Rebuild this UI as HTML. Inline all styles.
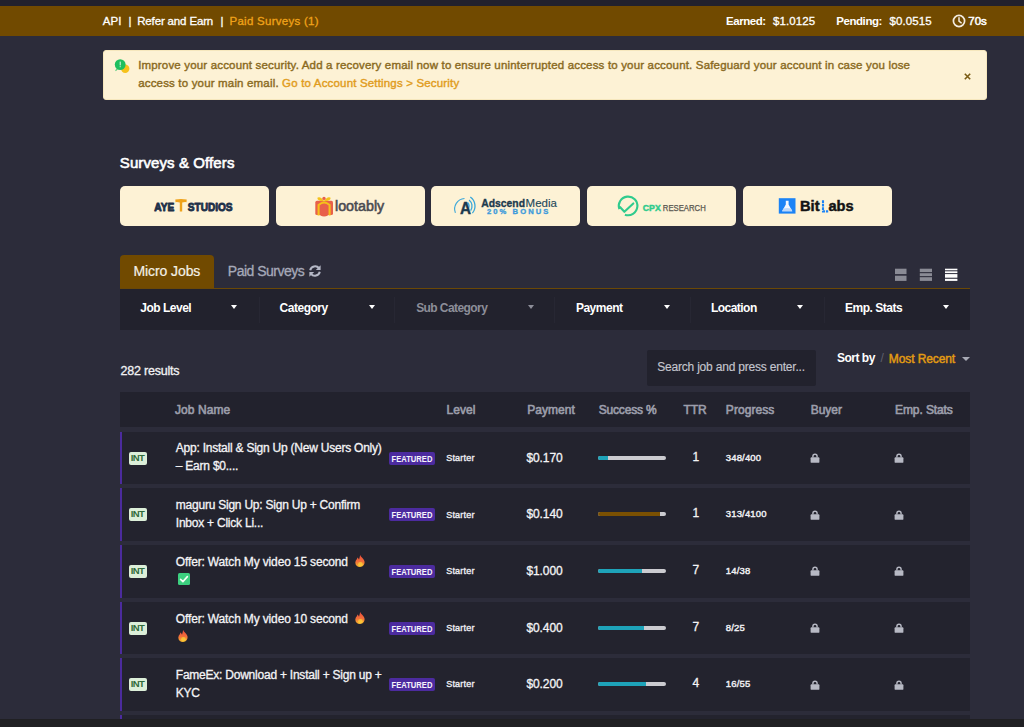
<!DOCTYPE html>
<html><head><meta charset="utf-8"><title>Jobs</title>
<style>
*{box-sizing:border-box;margin:0;padding:0}
html,body{width:1024px;height:727px;overflow:hidden}
body{background:#2c2c3a;font-family:"Liberation Sans",sans-serif;color:#fff;position:relative}
</style></head><body>
<div style="position:absolute;left:0;top:0;width:1024px;height:5.6px;background:#21212d"></div>
<div style="position:absolute;left:0;top:5.6px;width:1024px;height:30.9px;background:#714a00"></div>
<div style="position:absolute;left:102.8px;top:15.67px;font-size:11.5px;line-height:11.5px;white-space:nowrap;-webkit-text-stroke:0.3px currentColor;letter-spacing:0.1px">API</div>
<div style="position:absolute;left:128.5px;top:15.67px;font-size:11.5px;line-height:11.5px;white-space:nowrap;-webkit-text-stroke:0.3px currentColor;">|</div>
<div style="position:absolute;left:137.2px;top:15.67px;font-size:11.5px;line-height:11.5px;white-space:nowrap;-webkit-text-stroke:0.3px currentColor;letter-spacing:-0.15px">Refer and Earn</div>
<div style="position:absolute;left:220.5px;top:15.67px;font-size:11.5px;line-height:11.5px;white-space:nowrap;-webkit-text-stroke:0.3px currentColor;">|</div>
<div style="position:absolute;left:229.5px;top:15.67px;font-size:11.5px;line-height:11.5px;white-space:nowrap;-webkit-text-stroke:0.3px currentColor;letter-spacing:0.27px;color:#f0a31a">Paid Surveys (1)</div>
<div style="position:absolute;left:726.0px;top:15.67px;font-size:11.5px;line-height:11.5px;white-space:nowrap;font-weight:bold;letter-spacing:-0.45px">Earned:</div>
<div style="position:absolute;left:772.9px;top:15.67px;font-size:11.5px;line-height:11.5px;white-space:nowrap;-webkit-text-stroke:0.3px currentColor;letter-spacing:0.1px">$1.0125</div>
<div style="position:absolute;left:836.2px;top:15.67px;font-size:11.5px;line-height:11.5px;white-space:nowrap;font-weight:bold;letter-spacing:-0.42px">Pending:</div>
<div style="position:absolute;left:889.4px;top:15.67px;font-size:11.5px;line-height:11.5px;white-space:nowrap;-webkit-text-stroke:0.3px currentColor;letter-spacing:0.1px">$0.0515</div>
<svg style="position:absolute;left:952px;top:14px" width="14" height="14" viewBox="0 0 14 14"><circle cx="7" cy="7" r="5.6" fill="none" stroke="#f3ece0" stroke-width="1.7"/><path d="M7 3.8V7.2L9.2 8.8" fill="none" stroke="#f3ece0" stroke-width="1.5" stroke-linecap="round"/></svg>
<div style="position:absolute;left:968.2px;top:15.67px;font-size:11.5px;line-height:11.5px;white-space:nowrap;letter-spacing:0.05px;-webkit-text-stroke:0.5px #fff">70s</div>
<div style="position:absolute;left:103.4px;top:49.6px;width:883.6px;height:50.8px;background:#fdf2d5;border-radius:3px;border:1px solid #f6e7bd"></div>
<svg style="position:absolute;left:113px;top:57px" width="20" height="18" viewBox="0 0 20 18"><circle cx="12.2" cy="11.8" r="4.2" fill="#f6c21c"/><circle cx="7.2" cy="7.6" r="5.4" fill="#1fbf5f"/><path d="M3 12.2L2.2 14.2L5 12.6Z" fill="#1fbf5f"/><rect x="6.7" y="4.6" width="1" height="3.8" fill="#e6f5e6"/><rect x="6.7" y="9.2" width="1" height="1" fill="#e6f5e6"/></svg>
<div style="position:absolute;left:138.2px;top:59.87px;font-size:11.5px;line-height:11.5px;white-space:nowrap;color:#8a6a1e;-webkit-text-stroke:0.4px #8a6a1e;letter-spacing:0.17px">Improve your account security. Add a recovery email now to ensure uninterrupted access to your account. Safeguard your account in case you lose</div>
<div style="position:absolute;left:138.2px;top:77.87px;font-size:11.5px;line-height:11.5px;white-space:nowrap;color:#8a6a1e;-webkit-text-stroke:0.4px #8a6a1e;letter-spacing:0.17px">access to your main email. <span style="color:#e19c1d;-webkit-text-stroke:0.4px #e19c1d">Go to Account Settings &gt; Security</span></div>
<svg style="position:absolute;left:964px;top:72.5px" width="7" height="7" viewBox="0 0 7 7"><path d="M0.8 0.8L6.2 6.2M6.2 0.8L0.8 6.2" stroke="#7a5c14" stroke-width="1.6"/></svg>
<div style="position:absolute;left:119.8px;top:155.10px;font-size:15px;line-height:15px;white-space:nowrap;letter-spacing:0.1px;-webkit-text-stroke:0.6px #fff">Surveys &amp; Offers</div>
<div style="position:absolute;left:120px;top:186px;width:149px;height:40px;background:#fdf2d5;border-radius:5px"></div>
<div style="position:absolute;left:275.5px;top:186px;width:149px;height:40px;background:#fdf2d5;border-radius:5px"></div>
<div style="position:absolute;left:431px;top:186px;width:149px;height:40px;background:#fdf2d5;border-radius:5px"></div>
<div style="position:absolute;left:587px;top:186px;width:149px;height:40px;background:#fdf2d5;border-radius:5px"></div>
<div style="position:absolute;left:742.5px;top:186px;width:149px;height:40px;background:#fdf2d5;border-radius:5px"></div>
<svg style="position:absolute;left:150px;top:194px" width="90" height="22" viewBox="0 0 90 22">
<text x="4.3" y="16.9" font-family="Liberation Sans" font-weight="bold" font-size="11.6" fill="#1e3049" stroke="#1e3049" stroke-width="0.9" stroke-linejoin="round" textLength="20" lengthAdjust="spacingAndGlyphs">AYE</text>
<path d="M25.3 5.6Q31 4.4 36.7 5.6L36.5 8.2Q34.2 7.9 32.2 8.6L32.2 17.4L29.8 17.4L29.8 8.6Q27.8 7.9 25.5 8.2Z" fill="#eea21b"/>
<text x="37.8" y="16.9" font-family="Liberation Sans" font-weight="bold" font-size="11.6" fill="#1e3049" stroke="#1e3049" stroke-width="0.9" stroke-linejoin="round" textLength="44.8" lengthAdjust="spacingAndGlyphs">STUDIOS</text>
</svg>
<svg style="position:absolute;left:312px;top:194px" width="80" height="26" viewBox="0 0 80 26">
<path d="M3.3 8.5Q3.3 6.8 5 6.8H19.4Q21 6.8 21 8.5V19.5Q21 21 19.4 21H5Q3.3 21 3.3 19.5Z" fill="#e8604a"/>
<path d="M6.6 21.5V11Q12.1 6 17.6 11V21.5" fill="none" stroke="#f5c11a" stroke-width="2.1"/>
<path d="M8.3 21.5V12.2Q12.1 9 15.9 12.2V21.5Q12.1 23.6 8.3 21.5Z" fill="#e8604a"/>
<path d="M12 7Q8.5 1.8 5.6 3.6Q4.2 6.6 12 7.6Q19.8 6.6 18.4 3.6Q15.5 1.8 12 7Z" fill="#f5c11a"/>
<circle cx="12" cy="4.4" r="1.7" fill="#e8604a"/>
<text x="23" y="16.75" font-family="Liberation Sans" font-size="14" fill="#4a4a51" stroke="#4a4a51" stroke-width="0.55" textLength="49.2" lengthAdjust="spacingAndGlyphs">lootably</text>
</svg>
<svg style="position:absolute;left:450px;top:194px" width="112" height="24" viewBox="0 0 112 24">
<path d="M5.4 18.9A10.5 10.5 0 0 1 14.5 4.5" fill="none" stroke="#3aa7d9" stroke-width="1.1"/>
<path d="M20.3 3A11 11 0 0 1 22.4 19.1M19.1 5.9A8 8 0 0 1 20.6 16.6M17.5 8.5A5 5 0 0 1 18.3 14.5" fill="none" stroke="#3aa7d9" stroke-width="1.3"/>
<text x="9.9" y="19.5" font-family="Liberation Sans" font-weight="bold" font-size="16" fill="#1c3a4e" stroke="#1c3a4e" stroke-width="0.4" textLength="11" lengthAdjust="spacingAndGlyphs">A</text>
<text x="31.2" y="12.6" font-family="Liberation Sans" font-weight="bold" font-size="11.5" fill="#1c3a4e" stroke="#1c3a4e" stroke-width="0.35" textLength="43.8" lengthAdjust="spacingAndGlyphs">Adscend</text>
<text x="75.6" y="12.6" font-family="Liberation Sans" font-size="11.5" fill="#244a5c" stroke="#244a5c" stroke-width="0.15" textLength="31.3" lengthAdjust="spacingAndGlyphs">Media</text>
<text x="37" y="20" font-family="Liberation Sans" font-weight="bold" font-size="7.6" fill="#3d9bdb" stroke="#3d9bdb" stroke-width="0.35" textLength="61.3" lengthAdjust="spacing">20% BONUS</text>
</svg>
<svg style="position:absolute;left:612px;top:192px" width="100" height="28" viewBox="0 0 100 28">
<path d="M7.36 17.08A9.3 9.3 0 1 1 12.92 22.64" fill="none" stroke="#2fcb8d" stroke-width="2.1"/>
<path d="M8.2 15.2L12.4 19.8L21.3 11.4" fill="none" stroke="#2fcb8d" stroke-width="2.1" stroke-linecap="round" stroke-linejoin="round"/>
<text x="30.8" y="18.6" font-family="Liberation Sans" font-weight="bold" font-size="9" fill="#2fcb8d" stroke="#2fcb8d" stroke-width="0.45" textLength="18" lengthAdjust="spacingAndGlyphs">CPX</text>
<text x="50.8" y="18.6" font-family="Liberation Sans" font-size="9" fill="#59574f" stroke="#59574f" stroke-width="0.25" textLength="43" lengthAdjust="spacingAndGlyphs">RESEARCH</text>
</svg>
<svg style="position:absolute;left:774px;top:192px" width="90" height="26" viewBox="0 0 90 26">
<rect x="4.8" y="6.2" width="16.7" height="15.4" fill="#1b83f6"/>
<path d="M11.8 8.8H14.6V12.6L18.3 19.2H8.1L11.8 12.6Z" fill="#f4f8ff"/>
<path d="M9.4 16.5Q13 15.3 17 16.5L18.3 19.2H8.1Z" fill="#bcd8fb"/>
<text x="26" y="19.3" font-family="Liberation Sans" font-weight="bold" font-size="15" fill="#141414" stroke="#141414" stroke-width="0.5" textLength="19.5" lengthAdjust="spacingAndGlyphs">Bit</text>
<path d="M49 8.3V19.4H54.2" fill="none" stroke="#1b83f6" stroke-width="2.1" stroke-dasharray="2.6 0.9"/>
<text x="54.4" y="19.3" font-family="Liberation Sans" font-weight="bold" font-size="15" fill="#141414" stroke="#141414" stroke-width="0.5" textLength="25.2" lengthAdjust="spacingAndGlyphs">abs</text>
</svg>
<div style="position:absolute;left:120px;top:255px;width:94px;height:34px;background:#714a00;border-radius:4px 4px 0 0"></div>
<div style="position:absolute;left:133.4px;top:264.45px;font-size:14px;line-height:14px;white-space:nowrap;letter-spacing:-0.08px;color:#f4f0e6;-webkit-text-stroke:0.2px #f4f0e6">Micro Jobs</div>
<div style="position:absolute;left:227.8px;top:264.35px;font-size:14px;line-height:14px;white-space:nowrap;-webkit-text-stroke:0.3px currentColor;letter-spacing:-0.5px;color:#a6a9b9">Paid Surveys</div>
<svg style="position:absolute;left:308px;top:264px" width="14" height="14" viewBox="0 0 14 14"><path d="M2.2 6.2A5 5 0 0 1 11 4.2" fill="none" stroke="#b5b8c6" stroke-width="2"/><path d="M12.6 1.2V6H7.8Z" fill="#b5b8c6"/><path d="M11.8 7.8A5 5 0 0 1 3 9.8" fill="none" stroke="#b5b8c6" stroke-width="2"/><path d="M1.4 12.8V8H6.2Z" fill="#b5b8c6"/></svg>
<svg style="position:absolute;left:894px;top:268px" width="64" height="14" viewBox="0 0 64 14"><rect x="1" y="0.7" width="11.5" height="5.4" fill="#8a8b95"/><rect x="1" y="7.7" width="11.5" height="5.2" fill="#8a8b95"/><rect x="25.8" y="0.7" width="12.2" height="3.4" fill="#8a8b95"/><rect x="25.8" y="5.2" width="12.2" height="2.9" fill="#8a8b95"/><rect x="25.8" y="9.2" width="12.2" height="3.7" fill="#8a8b95"/><rect x="51" y="0.7" width="12.4" height="1.6" fill="#fff"/><rect x="51" y="3.3" width="12.4" height="1.8" fill="#fff"/><rect x="51" y="6.1" width="12.4" height="3.6" fill="#fff"/><rect x="51" y="10.8" width="12.4" height="2.1" fill="#fff"/></svg>
<div style="position:absolute;left:120px;top:288px;width:850px;height:42px;background:#22222d;border-top:1px solid #6b4806"></div>
<div style="position:absolute;left:140.3px;top:301.84px;font-size:12px;line-height:12px;white-space:nowrap;font-weight:bold;letter-spacing:-0.5px;color:#fff">Job Level</div>
<div style="position:absolute;left:231.1px;top:305px;width:0;height:0;border-left:3.8px solid transparent;border-right:3.8px solid transparent;border-top:4px solid #fff"></div>
<div style="position:absolute;left:279.5px;top:301.84px;font-size:12px;line-height:12px;white-space:nowrap;font-weight:bold;letter-spacing:-0.47px;color:#fff">Category</div>
<div style="position:absolute;left:369px;top:305px;width:0;height:0;border-left:3.8px solid transparent;border-right:3.8px solid transparent;border-top:4px solid #fff"></div>
<div style="position:absolute;left:416.2px;top:301.84px;font-size:12px;line-height:12px;white-space:nowrap;font-weight:bold;letter-spacing:-0.58px;color:#8d8e99">Sub Category</div>
<div style="position:absolute;left:528.4px;top:305px;width:0;height:0;border-left:3.8px solid transparent;border-right:3.8px solid transparent;border-top:4px solid #8d8e99"></div>
<div style="position:absolute;left:575.9px;top:301.84px;font-size:12px;line-height:12px;white-space:nowrap;font-weight:bold;letter-spacing:-0.48px;color:#fff">Payment</div>
<div style="position:absolute;left:663.8px;top:305px;width:0;height:0;border-left:3.8px solid transparent;border-right:3.8px solid transparent;border-top:4px solid #fff"></div>
<div style="position:absolute;left:710.9px;top:301.84px;font-size:12px;line-height:12px;white-space:nowrap;font-weight:bold;letter-spacing:-0.52px;color:#fff">Location</div>
<div style="position:absolute;left:796.9px;top:305px;width:0;height:0;border-left:3.8px solid transparent;border-right:3.8px solid transparent;border-top:4px solid #fff"></div>
<div style="position:absolute;left:845.0px;top:301.84px;font-size:12px;line-height:12px;white-space:nowrap;font-weight:bold;letter-spacing:-0.48px;color:#fff">Emp. Stats</div>
<div style="position:absolute;left:943.1px;top:305px;width:0;height:0;border-left:3.8px solid transparent;border-right:3.8px solid transparent;border-top:4px solid #fff"></div>
<div style="position:absolute;left:258.75px;top:297px;width:1px;height:26px;background:#272733"></div>
<div style="position:absolute;left:394.4px;top:297px;width:1px;height:26px;background:#272733"></div>
<div style="position:absolute;left:554px;top:297px;width:1px;height:26px;background:#272733"></div>
<div style="position:absolute;left:690px;top:297px;width:1px;height:26px;background:#272733"></div>
<div style="position:absolute;left:824px;top:297px;width:1px;height:26px;background:#272733"></div>
<div style="position:absolute;left:120.4px;top:364.92px;font-size:12.5px;line-height:12.5px;white-space:nowrap;-webkit-text-stroke:0.3px currentColor;letter-spacing:-0.2px;color:#f2f2f4">282 results</div>
<div style="position:absolute;left:647px;top:350px;width:169px;height:36px;background:#22222d;border-radius:2px"></div>
<div style="position:absolute;left:657.2px;top:360.74px;font-size:12px;line-height:12px;white-space:nowrap;-webkit-text-stroke:0.3px currentColor;letter-spacing:-0.2px;color:#c4c5cd;-webkit-text-stroke:0.15px #c4c5cd">Search job and press enter...</div>
<div style="position:absolute;left:837.0px;top:352.44px;font-size:12px;line-height:12px;white-space:nowrap;font-weight:bold;letter-spacing:-0.5px">Sort by</div>
<div style="position:absolute;left:880.5px;top:352.44px;font-size:12px;line-height:12px;white-space:nowrap;color:#5f606c">/</div>
<div style="position:absolute;left:888.8px;top:352.64px;font-size:12px;line-height:12px;white-space:nowrap;letter-spacing:-0.1px;color:#e39c12;-webkit-text-stroke:0.45px #e39c12">Most Recent</div>
<div style="position:absolute;left:961.8px;top:356.6px;width:0;height:0;border-left:4.1px solid transparent;border-right:4.1px solid transparent;border-top:4px solid #a9abb6"></div>
<div style="position:absolute;left:120px;top:392px;width:850px;height:35px;background:#22222d"></div>
<div style="position:absolute;left:174.9px;top:403.84px;font-size:12px;line-height:12px;white-space:nowrap;letter-spacing:0.1px;color:#9c9eab;-webkit-text-stroke:0.6px #9c9eab">Job Name</div>
<div style="position:absolute;left:446.6px;top:403.84px;font-size:12px;line-height:12px;white-space:nowrap;letter-spacing:0.05px;color:#9c9eab;-webkit-text-stroke:0.6px #9c9eab">Level</div>
<div style="position:absolute;left:527.2px;top:403.84px;font-size:12px;line-height:12px;white-space:nowrap;letter-spacing:0.04px;color:#9c9eab;-webkit-text-stroke:0.6px #9c9eab">Payment</div>
<div style="position:absolute;left:598.8000000000001px;top:403.84px;font-size:12px;line-height:12px;white-space:nowrap;letter-spacing:-0.2px;color:#9c9eab;-webkit-text-stroke:0.6px #9c9eab">Success %</div>
<div style="position:absolute;left:683.4px;top:403.84px;font-size:12px;line-height:12px;white-space:nowrap;letter-spacing:-0.07px;color:#9c9eab;-webkit-text-stroke:0.6px #9c9eab">TTR</div>
<div style="position:absolute;left:725.8000000000001px;top:403.84px;font-size:12px;line-height:12px;white-space:nowrap;letter-spacing:0.08px;color:#9c9eab;-webkit-text-stroke:0.6px #9c9eab">Progress</div>
<div style="position:absolute;left:810.7px;top:403.84px;font-size:12px;line-height:12px;white-space:nowrap;letter-spacing:-0.01px;color:#9c9eab;-webkit-text-stroke:0.6px #9c9eab">Buyer</div>
<div style="position:absolute;left:895.1px;top:403.84px;font-size:12px;line-height:12px;white-space:nowrap;letter-spacing:-0.11px;color:#9c9eab;-webkit-text-stroke:0.6px #9c9eab">Emp. Stats</div>
<div style="position:absolute;left:120px;top:431.8px;width:850px;height:52.5px;background:#23232e;border-left:2px solid #4b2b9d"></div>
<div style="position:absolute;left:128.6px;top:451.8px;width:18.8px;height:13px;background:#dcefd9;border-radius:2px;border:none"></div>
<div style="position:absolute;left:130.8px;top:452.86px;font-size:9.5px;line-height:9.5px;white-space:nowrap;font-weight:bold;letter-spacing:-0.6px;color:#2f6b3a">INT</div>
<div style="position:absolute;left:175.8px;top:442.24px;font-size:12px;line-height:12px;white-space:nowrap;-webkit-text-stroke:0.3px currentColor;letter-spacing:-0.23px;color:#f4f4f6">App: Install &amp; Sign Up (New Users Only)</div>
<div style="position:absolute;left:175.8px;top:460.24px;font-size:12px;line-height:12px;white-space:nowrap;-webkit-text-stroke:0.3px currentColor;letter-spacing:-0.23px;color:#f4f4f6">– Earn $0....</div>
<div style="position:absolute;left:388.8px;top:451.8px;width:46px;height:13px;background:#4c2b9f;border-radius:2px"></div>
<svg style="position:absolute;left:388.8px;top:451.8px" width="46" height="13"><text x="2.6" y="9.7" font-family="Liberation Sans" font-weight="bold" font-size="9.6" fill="#f6f4fb" textLength="40.8" lengthAdjust="spacingAndGlyphs">FEATURED</text></svg>
<div style="position:absolute;left:446.2px;top:453.98px;font-size:9px;line-height:9px;white-space:nowrap;-webkit-text-stroke:0.3px currentColor;letter-spacing:0.2px;color:#eeeef2;-webkit-text-stroke:0.35px #eeeef2">Starter</div>
<div style="position:absolute;left:526.4px;top:451.84px;font-size:12px;line-height:12px;white-space:nowrap;-webkit-text-stroke:0.3px currentColor;letter-spacing:-0.07px;color:#f4f4f6">$0.170</div>
<div style="position:absolute;left:598.3px;top:455.8px;width:67.7px;height:4px;background:#cbcbd0;border-radius:2px;overflow:hidden"><div style="width:15%;height:4px;background:#1ea3b9"></div></div>
<div style="position:absolute;left:692.6px;top:450.74px;font-size:12px;line-height:12px;white-space:nowrap;-webkit-text-stroke:0.3px currentColor;color:#f4f4f6">1</div>
<div style="position:absolute;left:725.8px;top:452.76px;font-size:9.5px;line-height:9.5px;white-space:nowrap;letter-spacing:0.15px;color:#f0f0f4;-webkit-text-stroke:0.4px #f0f0f4">348/400</div>
<svg style="position:absolute;left:809.5px;top:453.1px" width="10" height="10" viewBox="0 0 10 10"><path d="M2.9 4.6V3.4A2.1 2.1 0 0 1 7.1 3.4V4.6" stroke="#b7b9c4" stroke-width="1.4" fill="none"/><rect x="0.6" y="4.3" width="8.8" height="5.5" rx="0.9" fill="#b7b9c4"/></svg>
<svg style="position:absolute;left:894.0px;top:453.1px" width="10" height="10" viewBox="0 0 10 10"><path d="M2.9 4.6V3.4A2.1 2.1 0 0 1 7.1 3.4V4.6" stroke="#b7b9c4" stroke-width="1.4" fill="none"/><rect x="0.6" y="4.3" width="8.8" height="5.5" rx="0.9" fill="#b7b9c4"/></svg>
<div style="position:absolute;left:120px;top:488.4px;width:850px;height:52.5px;background:#23232e;border-left:2px solid #4b2b9d"></div>
<div style="position:absolute;left:128.6px;top:508.4px;width:18.8px;height:13px;background:#dcefd9;border-radius:2px;border:none"></div>
<div style="position:absolute;left:130.8px;top:509.46px;font-size:9.5px;line-height:9.5px;white-space:nowrap;font-weight:bold;letter-spacing:-0.6px;color:#2f6b3a">INT</div>
<div style="position:absolute;left:175.8px;top:498.84px;font-size:12px;line-height:12px;white-space:nowrap;-webkit-text-stroke:0.3px currentColor;letter-spacing:-0.23px;color:#f4f4f6">maguru Sign Up: Sign Up + Confirm</div>
<div style="position:absolute;left:175.8px;top:516.84px;font-size:12px;line-height:12px;white-space:nowrap;-webkit-text-stroke:0.3px currentColor;letter-spacing:-0.23px;color:#f4f4f6">Inbox + Click Li...</div>
<div style="position:absolute;left:388.8px;top:508.4px;width:46px;height:13px;background:#4c2b9f;border-radius:2px"></div>
<svg style="position:absolute;left:388.8px;top:508.4px" width="46" height="13"><text x="2.6" y="9.7" font-family="Liberation Sans" font-weight="bold" font-size="9.6" fill="#f6f4fb" textLength="40.8" lengthAdjust="spacingAndGlyphs">FEATURED</text></svg>
<div style="position:absolute;left:446.2px;top:510.58px;font-size:9px;line-height:9px;white-space:nowrap;-webkit-text-stroke:0.3px currentColor;letter-spacing:0.2px;color:#eeeef2;-webkit-text-stroke:0.35px #eeeef2">Starter</div>
<div style="position:absolute;left:526.4px;top:508.44px;font-size:12px;line-height:12px;white-space:nowrap;-webkit-text-stroke:0.3px currentColor;letter-spacing:-0.07px;color:#f4f4f6">$0.140</div>
<div style="position:absolute;left:598.3px;top:512.4px;width:67.7px;height:4px;background:#cbcbd0;border-radius:2px;overflow:hidden"><div style="width:91%;height:4px;background:#7a5002"></div></div>
<div style="position:absolute;left:692.6px;top:507.34px;font-size:12px;line-height:12px;white-space:nowrap;-webkit-text-stroke:0.3px currentColor;color:#f4f4f6">1</div>
<div style="position:absolute;left:725.8px;top:509.36px;font-size:9.5px;line-height:9.5px;white-space:nowrap;letter-spacing:0.15px;color:#f0f0f4;-webkit-text-stroke:0.4px #f0f0f4">313/4100</div>
<svg style="position:absolute;left:809.5px;top:509.7px" width="10" height="10" viewBox="0 0 10 10"><path d="M2.9 4.6V3.4A2.1 2.1 0 0 1 7.1 3.4V4.6" stroke="#b7b9c4" stroke-width="1.4" fill="none"/><rect x="0.6" y="4.3" width="8.8" height="5.5" rx="0.9" fill="#b7b9c4"/></svg>
<svg style="position:absolute;left:894.0px;top:509.7px" width="10" height="10" viewBox="0 0 10 10"><path d="M2.9 4.6V3.4A2.1 2.1 0 0 1 7.1 3.4V4.6" stroke="#b7b9c4" stroke-width="1.4" fill="none"/><rect x="0.6" y="4.3" width="8.8" height="5.5" rx="0.9" fill="#b7b9c4"/></svg>
<div style="position:absolute;left:120px;top:545.0px;width:850px;height:52.5px;background:#23232e;border-left:2px solid #4b2b9d"></div>
<div style="position:absolute;left:128.6px;top:565.0px;width:18.8px;height:13px;background:#dcefd9;border-radius:2px;border:none"></div>
<div style="position:absolute;left:130.8px;top:566.06px;font-size:9.5px;line-height:9.5px;white-space:nowrap;font-weight:bold;letter-spacing:-0.6px;color:#2f6b3a">INT</div>
<div style="position:absolute;left:175.8px;top:555.44px;font-size:12px;line-height:12px;white-space:nowrap;-webkit-text-stroke:0.3px currentColor;letter-spacing:-0.15px;color:#f4f4f6">Offer: Watch My video 15 second <svg width="10" height="12" viewBox="0 0 10 12" style="vertical-align:-1px;margin-left:3.6px"><defs><linearGradient id="fg1" x1="0" y1="0" x2="0" y2="1"><stop offset="0" stop-color="#ec4a3c"/><stop offset="0.55" stop-color="#f2703a"/><stop offset="1" stop-color="#f8b72c"/></linearGradient></defs><path d="M5.2 0C5.8 2 8.6 3.2 9.4 6C10.2 9.2 8 12 5 12C2 12 0 9.8 0.4 7C0.8 5 2.2 4.4 2.4 2.6C3.4 3.4 3.8 4.2 4 4.8C4.6 3.2 4.6 1.6 5.2 0Z" fill="url(#fg1)"/><ellipse cx="5.4" cy="9.2" rx="2.3" ry="2.2" fill="#fbd23a" opacity="0.75"/></svg></div>
<div style="position:absolute;left:175.8px;top:573.44px;font-size:12px;line-height:12px;white-space:nowrap;-webkit-text-stroke:0.3px currentColor;letter-spacing:-0.23px;color:#f4f4f6"><svg width="12" height="12" viewBox="0 0 12 12" style="vertical-align:-2px;margin-left:2px"><rect x="0" y="0" width="12" height="12" rx="1.5" fill="#3ccf7f"/><path d="M2.6 6.4L4.9 8.6L9.4 3.6" stroke="#f4fff6" stroke-width="1.6" fill="none" stroke-linecap="round" stroke-linejoin="round"/></svg></div>
<div style="position:absolute;left:388.8px;top:565.0px;width:46px;height:13px;background:#4c2b9f;border-radius:2px"></div>
<svg style="position:absolute;left:388.8px;top:565.0px" width="46" height="13"><text x="2.6" y="9.7" font-family="Liberation Sans" font-weight="bold" font-size="9.6" fill="#f6f4fb" textLength="40.8" lengthAdjust="spacingAndGlyphs">FEATURED</text></svg>
<div style="position:absolute;left:446.2px;top:567.18px;font-size:9px;line-height:9px;white-space:nowrap;-webkit-text-stroke:0.3px currentColor;letter-spacing:0.2px;color:#eeeef2;-webkit-text-stroke:0.35px #eeeef2">Starter</div>
<div style="position:absolute;left:526.4px;top:565.04px;font-size:12px;line-height:12px;white-space:nowrap;-webkit-text-stroke:0.3px currentColor;letter-spacing:-0.07px;color:#f4f4f6">$1.000</div>
<div style="position:absolute;left:598.3px;top:569.0px;width:67.7px;height:4px;background:#cbcbd0;border-radius:2px;overflow:hidden"><div style="width:64%;height:4px;background:#1ea3b9"></div></div>
<div style="position:absolute;left:692.6px;top:563.94px;font-size:12px;line-height:12px;white-space:nowrap;-webkit-text-stroke:0.3px currentColor;color:#f4f4f6">7</div>
<div style="position:absolute;left:725.8px;top:565.96px;font-size:9.5px;line-height:9.5px;white-space:nowrap;letter-spacing:0.15px;color:#f0f0f4;-webkit-text-stroke:0.4px #f0f0f4">14/38</div>
<svg style="position:absolute;left:809.5px;top:566.3px" width="10" height="10" viewBox="0 0 10 10"><path d="M2.9 4.6V3.4A2.1 2.1 0 0 1 7.1 3.4V4.6" stroke="#b7b9c4" stroke-width="1.4" fill="none"/><rect x="0.6" y="4.3" width="8.8" height="5.5" rx="0.9" fill="#b7b9c4"/></svg>
<svg style="position:absolute;left:894.0px;top:566.3px" width="10" height="10" viewBox="0 0 10 10"><path d="M2.9 4.6V3.4A2.1 2.1 0 0 1 7.1 3.4V4.6" stroke="#b7b9c4" stroke-width="1.4" fill="none"/><rect x="0.6" y="4.3" width="8.8" height="5.5" rx="0.9" fill="#b7b9c4"/></svg>
<div style="position:absolute;left:120px;top:601.7px;width:850px;height:52.5px;background:#23232e;border-left:2px solid #4b2b9d"></div>
<div style="position:absolute;left:128.6px;top:621.7px;width:18.8px;height:13px;background:#dcefd9;border-radius:2px;border:none"></div>
<div style="position:absolute;left:130.8px;top:622.76px;font-size:9.5px;line-height:9.5px;white-space:nowrap;font-weight:bold;letter-spacing:-0.6px;color:#2f6b3a">INT</div>
<div style="position:absolute;left:175.8px;top:612.14px;font-size:12px;line-height:12px;white-space:nowrap;-webkit-text-stroke:0.3px currentColor;letter-spacing:-0.15px;color:#f4f4f6">Offer: Watch My video 10 second <svg width="10" height="12" viewBox="0 0 10 12" style="vertical-align:-1px;margin-left:3.6px"><defs><linearGradient id="fg2" x1="0" y1="0" x2="0" y2="1"><stop offset="0" stop-color="#ec4a3c"/><stop offset="0.55" stop-color="#f2703a"/><stop offset="1" stop-color="#f8b72c"/></linearGradient></defs><path d="M5.2 0C5.8 2 8.6 3.2 9.4 6C10.2 9.2 8 12 5 12C2 12 0 9.8 0.4 7C0.8 5 2.2 4.4 2.4 2.6C3.4 3.4 3.8 4.2 4 4.8C4.6 3.2 4.6 1.6 5.2 0Z" fill="url(#fg2)"/><ellipse cx="5.4" cy="9.2" rx="2.3" ry="2.2" fill="#fbd23a" opacity="0.75"/></svg></div>
<div style="position:absolute;left:175.8px;top:630.14px;font-size:12px;line-height:12px;white-space:nowrap;-webkit-text-stroke:0.3px currentColor;letter-spacing:-0.23px;color:#f4f4f6"><svg width="10" height="12" viewBox="0 0 10 12" style="vertical-align:-1px;margin-left:2.5px"><defs><linearGradient id="fg3" x1="0" y1="0" x2="0" y2="1"><stop offset="0" stop-color="#ec4a3c"/><stop offset="0.55" stop-color="#f2703a"/><stop offset="1" stop-color="#f8b72c"/></linearGradient></defs><path d="M5.2 0C5.8 2 8.6 3.2 9.4 6C10.2 9.2 8 12 5 12C2 12 0 9.8 0.4 7C0.8 5 2.2 4.4 2.4 2.6C3.4 3.4 3.8 4.2 4 4.8C4.6 3.2 4.6 1.6 5.2 0Z" fill="url(#fg3)"/><ellipse cx="5.4" cy="9.2" rx="2.3" ry="2.2" fill="#fbd23a" opacity="0.75"/></svg></div>
<div style="position:absolute;left:388.8px;top:621.7px;width:46px;height:13px;background:#4c2b9f;border-radius:2px"></div>
<svg style="position:absolute;left:388.8px;top:621.7px" width="46" height="13"><text x="2.6" y="9.7" font-family="Liberation Sans" font-weight="bold" font-size="9.6" fill="#f6f4fb" textLength="40.8" lengthAdjust="spacingAndGlyphs">FEATURED</text></svg>
<div style="position:absolute;left:446.2px;top:623.88px;font-size:9px;line-height:9px;white-space:nowrap;-webkit-text-stroke:0.3px currentColor;letter-spacing:0.2px;color:#eeeef2;-webkit-text-stroke:0.35px #eeeef2">Starter</div>
<div style="position:absolute;left:526.4px;top:621.74px;font-size:12px;line-height:12px;white-space:nowrap;-webkit-text-stroke:0.3px currentColor;letter-spacing:-0.07px;color:#f4f4f6">$0.400</div>
<div style="position:absolute;left:598.3px;top:625.7px;width:67.7px;height:4px;background:#cbcbd0;border-radius:2px;overflow:hidden"><div style="width:68%;height:4px;background:#1ea3b9"></div></div>
<div style="position:absolute;left:692.6px;top:620.64px;font-size:12px;line-height:12px;white-space:nowrap;-webkit-text-stroke:0.3px currentColor;color:#f4f4f6">7</div>
<div style="position:absolute;left:725.8px;top:622.66px;font-size:9.5px;line-height:9.5px;white-space:nowrap;letter-spacing:0.15px;color:#f0f0f4;-webkit-text-stroke:0.4px #f0f0f4">8/25</div>
<svg style="position:absolute;left:809.5px;top:623.0px" width="10" height="10" viewBox="0 0 10 10"><path d="M2.9 4.6V3.4A2.1 2.1 0 0 1 7.1 3.4V4.6" stroke="#b7b9c4" stroke-width="1.4" fill="none"/><rect x="0.6" y="4.3" width="8.8" height="5.5" rx="0.9" fill="#b7b9c4"/></svg>
<svg style="position:absolute;left:894.0px;top:623.0px" width="10" height="10" viewBox="0 0 10 10"><path d="M2.9 4.6V3.4A2.1 2.1 0 0 1 7.1 3.4V4.6" stroke="#b7b9c4" stroke-width="1.4" fill="none"/><rect x="0.6" y="4.3" width="8.8" height="5.5" rx="0.9" fill="#b7b9c4"/></svg>
<div style="position:absolute;left:120px;top:658.3px;width:850px;height:52.5px;background:#23232e;border-left:2px solid #4b2b9d"></div>
<div style="position:absolute;left:128.6px;top:678.3px;width:18.8px;height:13px;background:#dcefd9;border-radius:2px;border:none"></div>
<div style="position:absolute;left:130.8px;top:679.36px;font-size:9.5px;line-height:9.5px;white-space:nowrap;font-weight:bold;letter-spacing:-0.6px;color:#2f6b3a">INT</div>
<div style="position:absolute;left:175.8px;top:668.74px;font-size:12px;line-height:12px;white-space:nowrap;-webkit-text-stroke:0.3px currentColor;letter-spacing:-0.23px;color:#f4f4f6">FameEx: Download + Install + Sign up +</div>
<div style="position:absolute;left:175.8px;top:686.74px;font-size:12px;line-height:12px;white-space:nowrap;-webkit-text-stroke:0.3px currentColor;letter-spacing:-0.23px;color:#f4f4f6">KYC</div>
<div style="position:absolute;left:388.8px;top:678.3px;width:46px;height:13px;background:#4c2b9f;border-radius:2px"></div>
<svg style="position:absolute;left:388.8px;top:678.3px" width="46" height="13"><text x="2.6" y="9.7" font-family="Liberation Sans" font-weight="bold" font-size="9.6" fill="#f6f4fb" textLength="40.8" lengthAdjust="spacingAndGlyphs">FEATURED</text></svg>
<div style="position:absolute;left:446.2px;top:680.48px;font-size:9px;line-height:9px;white-space:nowrap;-webkit-text-stroke:0.3px currentColor;letter-spacing:0.2px;color:#eeeef2;-webkit-text-stroke:0.35px #eeeef2">Starter</div>
<div style="position:absolute;left:526.4px;top:678.34px;font-size:12px;line-height:12px;white-space:nowrap;-webkit-text-stroke:0.3px currentColor;letter-spacing:-0.07px;color:#f4f4f6">$0.200</div>
<div style="position:absolute;left:598.3px;top:682.3px;width:67.7px;height:4px;background:#cbcbd0;border-radius:2px;overflow:hidden"><div style="width:71%;height:4px;background:#1ea3b9"></div></div>
<div style="position:absolute;left:692.6px;top:677.24px;font-size:12px;line-height:12px;white-space:nowrap;-webkit-text-stroke:0.3px currentColor;color:#f4f4f6">4</div>
<div style="position:absolute;left:725.8px;top:679.26px;font-size:9.5px;line-height:9.5px;white-space:nowrap;letter-spacing:0.15px;color:#f0f0f4;-webkit-text-stroke:0.4px #f0f0f4">16/55</div>
<svg style="position:absolute;left:809.5px;top:679.5999999999999px" width="10" height="10" viewBox="0 0 10 10"><path d="M2.9 4.6V3.4A2.1 2.1 0 0 1 7.1 3.4V4.6" stroke="#b7b9c4" stroke-width="1.4" fill="none"/><rect x="0.6" y="4.3" width="8.8" height="5.5" rx="0.9" fill="#b7b9c4"/></svg>
<svg style="position:absolute;left:894.0px;top:679.5999999999999px" width="10" height="10" viewBox="0 0 10 10"><path d="M2.9 4.6V3.4A2.1 2.1 0 0 1 7.1 3.4V4.6" stroke="#b7b9c4" stroke-width="1.4" fill="none"/><rect x="0.6" y="4.3" width="8.8" height="5.5" rx="0.9" fill="#b7b9c4"/></svg>
<div style="position:absolute;left:120px;top:715.0px;width:850px;height:52.5px;background:#23232e;border-left:2px solid #4b2b9d"></div>
<div style="position:absolute;left:0;top:719px;width:1024px;height:8px;background:#202023"></div>
</body></html>
